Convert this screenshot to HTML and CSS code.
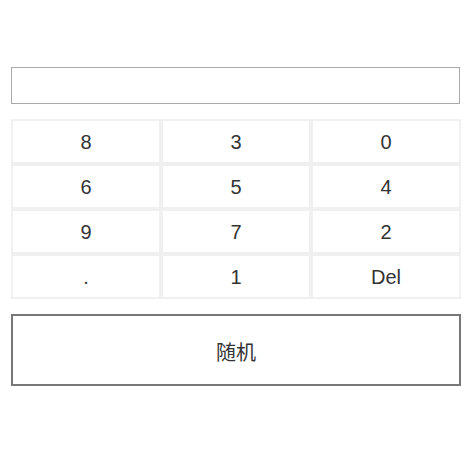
FILE: index.html
```html
<!DOCTYPE html>
<html lang="zh">
<head>
<meta charset="utf-8">
<title>Keypad</title>
<link rel="stylesheet" href="styles.css">
</head>
<body>
<div class="app">
  <input class="display" type="text">
  <div class="keypad">
    <div class="key">8</div>
    <div class="key">3</div>
    <div class="key">0</div>
    <div class="key">6</div>
    <div class="key">5</div>
    <div class="key">4</div>
    <div class="key">9</div>
    <div class="key">7</div>
    <div class="key">2</div>
    <div class="key">.</div>
    <div class="key">1</div>
    <div class="key">Del</div>
  </div>
  <button class="random">随机</button>
</div>
</body>
</html>
```
FILE: styles.css
```css
html, body {
  margin: 0;
  padding: 0;
  background: #fff;
}
body {
  font-family: "Liberation Sans", Arial, "Noto Sans CJK SC", sans-serif;
  color: #333;
}
.app {
  width: 450px;
  padding: 67px 0 0 11px;
  display: flex;
  flex-direction: column;
}
.display {
  box-sizing: border-box;
  width: 449px;
  height: 37px;
  margin: 0;
  border: 1px solid #a9a9a9;
  padding: 0 6px;
  font: inherit;
  outline: none;
}
.keypad {
  margin-top: 15px;
  display: grid;
  grid-template-columns: repeat(3, 150px);
  grid-auto-rows: 45px;
}
.key {
  box-sizing: border-box;
  border: 2px solid #f0f0f0;
  display: flex;
  align-items: center;
  justify-content: center;
  font-size: 20px;
  padding-top: 1px;
}
.random {
  box-sizing: border-box;
  margin-top: 15px;
  width: 450px;
  height: 72px;
  border: 2px solid #777;
  background: #fff;
  color: #333;
  font-family: "Liberation Sans", "Noto Sans CJK SC", sans-serif;
  font-size: 20px;
  padding: 2px 0 0;
}
```
